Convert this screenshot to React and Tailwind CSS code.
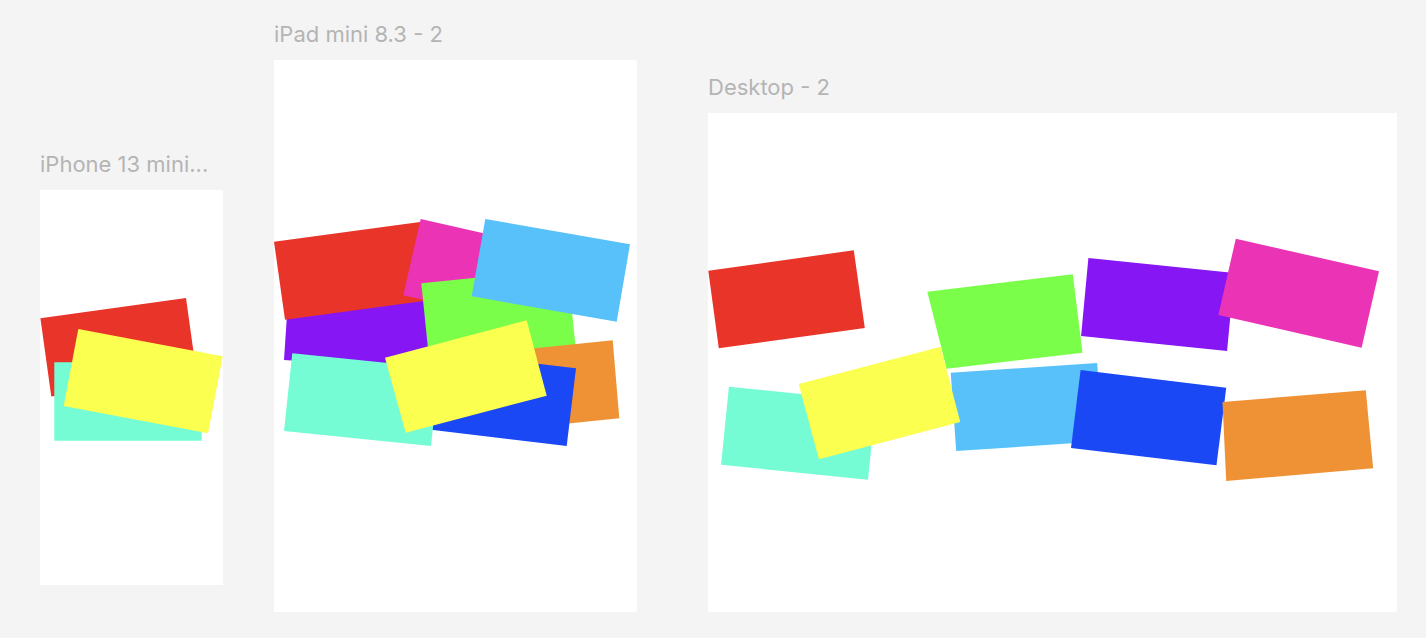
const frames = [
  {
    name: 'iPhone 13 mini...',
    box: 'left-[40px] top-[190px] w-[183px] h-[395px]',
    x: 40,
    y: 190,
    shapes: [
      { fill: '#e9342a', pts: [[40.4, 318.2], [186, 298], [196.9, 376.2], [51.3, 396.4]] },
      { fill: '#75fcd5', pts: [[54.3, 362.3], [201.7, 362.3], [201.7, 440.7], [54.3, 440.7]] },
      { fill: '#fbff50', pts: [[78.3, 329], [222.7, 356.3], [208.1, 433.3], [63.7, 406]] },
    ],
  },
  {
    name: 'iPad mini 8.3 - 2',
    box: 'left-[274px] top-[60px] w-[363px] h-[552px]',
    x: 274,
    y: 60,
    shapes: [
      { fill: '#8617f4', pts: [[289.2, 281.2], [435.9, 290.9], [430.7, 369.7], [284, 360]] },
      { fill: '#e9342a', pts: [[274, 241.7], [420, 222], [431, 300], [285, 319.7]] },
      { fill: '#ea33b5', pts: [[420.7, 219], [564.2, 251.5], [546.8, 327.8], [403.3, 295.3]] },
      { fill: '#7afe4a', pts: [[421.3, 283.3], [567.5, 268.2], [575.6, 346.8], [429.4, 361.9]] },
      { fill: '#58c1fa', pts: [[485.3, 219], [630, 244.3], [616.7, 321.7], [471.7, 296.3]] },
      { fill: '#ef9235', pts: [[466.5, 355.4], [612.7, 340.3], [619.3, 418.3], [473.1, 433.4]] },
      { fill: '#1b48f5', pts: [[430, 350.9], [576, 368.3], [566.7, 446], [420.7, 428.6]] },
      { fill: '#75fcd5', pts: [[292.3, 353.3], [439.3, 368.3], [431, 446], [284, 431]] },
      { fill: '#fbff50', pts: [[385, 357.7], [526.7, 320.3], [546.7, 395.7], [405.7, 432.7]] },
    ],
  },
  {
    name: 'Desktop - 2',
    box: 'left-[708px] top-[113px] w-[689px] h-[499px]',
    x: 708,
    y: 113,
    shapes: [
      { fill: '#e9342a', pts: [[708.3, 270.7], [853.8, 250.3], [864.8, 328], [718.8, 348.3]] },
      { fill: '#7afe4a', pts: [[927.3, 291.7], [1072.8, 274.3], [1082.5, 352.7], [946.6, 368.7]] },
      { fill: '#8617f4', pts: [[1088.4, 258], [1234.4, 273], [1227.1, 351], [1081.1, 336]] },
      { fill: '#ea33b5', pts: [[1235.8, 238.7], [1379, 271.3], [1361.6, 347.7], [1218.4, 315]] },
      { fill: '#75fcd5', pts: [[728.9, 386.7], [875.8, 401.7], [868, 479.7], [721.1, 464.7]] },
      { fill: '#58c1fa', pts: [[950.7, 372.7], [1097.2, 363], [1102.7, 441.3], [956.2, 451]] },
      { fill: '#fbff50', pts: [[798.7, 384], [940.6, 346.7], [960.3, 422], [818.9, 459.3]] },
      { fill: '#1b48f5', pts: [[1080.6, 370], [1226.2, 387.7], [1216.5, 465.3], [1071, 448]] },
      { fill: '#ef9235', pts: [[1222.5, 402], [1365.8, 390.3], [1373.1, 468.3], [1226.2, 481]] },
    ],
  },
];

function Frame({ frame }) {
  return (
    <div className={`absolute ${frame.box}`}>
      {/* frame title sits above the board */}
      <span className="absolute left-0 -top-[41px] whitespace-nowrap text-[22px] leading-[30px] text-[#b4b4b4] font-['Inter','Liberation_Sans',sans-serif]">
        {frame.name}
      </span>
      <div className="w-full h-full bg-white overflow-hidden">
        <svg className="block w-full h-full">
          {frame.shapes.map((s, i) => (
            <polygon
              key={i}
              fill={s.fill}
              points={s.pts.map(([px, py]) => `${px - frame.x},${py - frame.y}`).join(' ')}
            />
          ))}
        </svg>
      </div>
    </div>
  );
}

export default function App() {
  return (
    <div className="relative w-[1426px] h-[638px] overflow-hidden bg-[#f4f4f4]">
      {frames.map((f) => (
        <Frame key={f.name} frame={f} />
      ))}
    </div>
  );
}
